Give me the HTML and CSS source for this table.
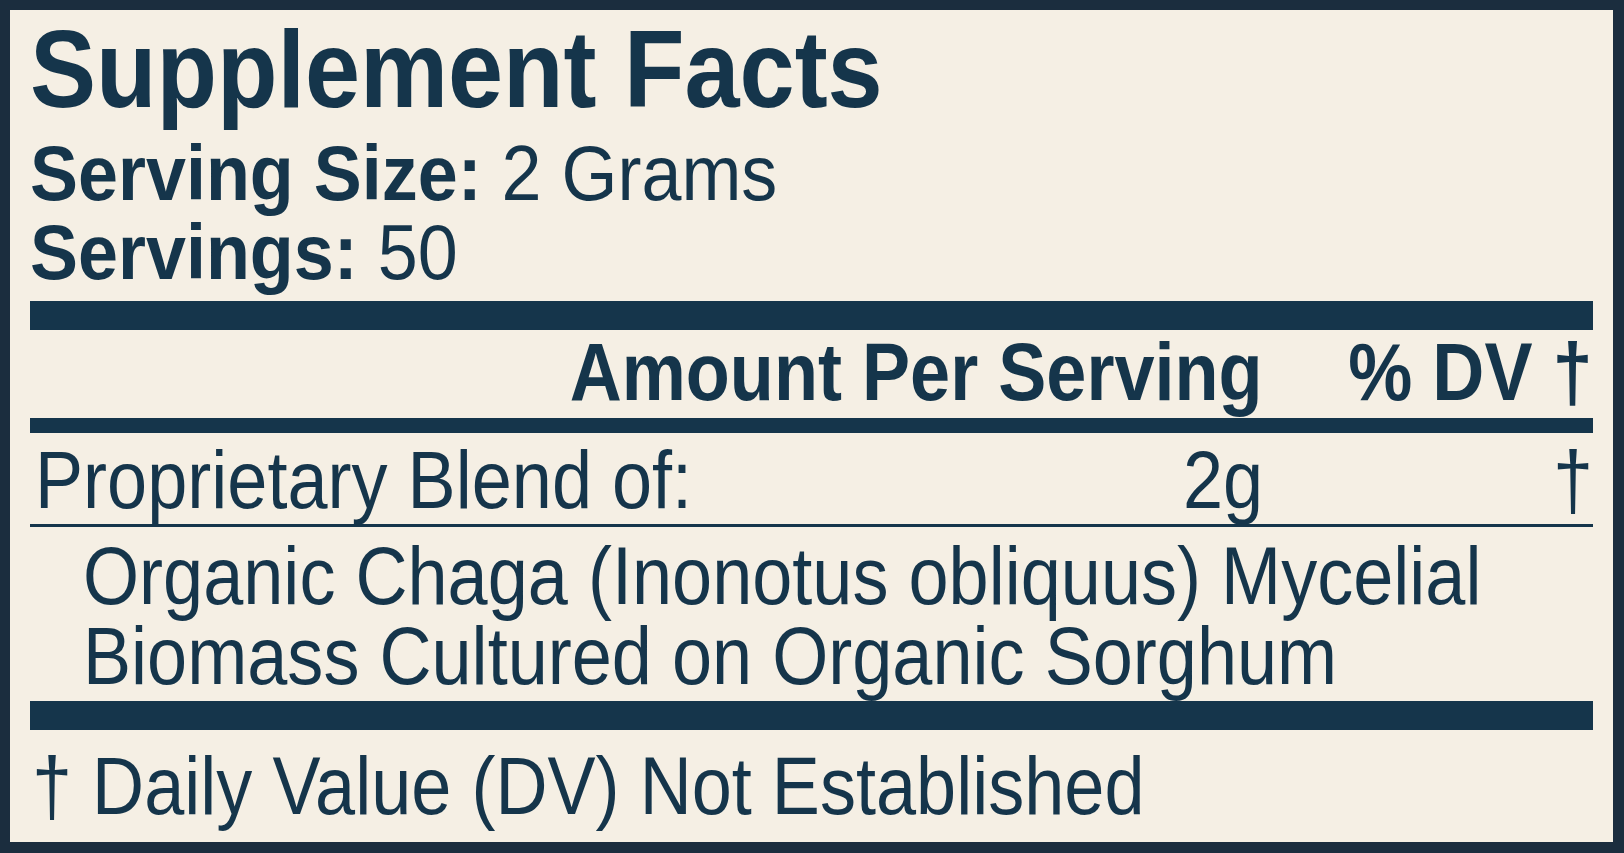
FILE: index.html
```html
<!DOCTYPE html>
<html lang="en">
<head>
<meta charset="utf-8">
<title>Supplement Facts</title>
<link rel="stylesheet" href="styles.css">
</head>
<body>
<div class="label">
  <header class="head">
    <h1 class="title"><span class="sx sx-title">Supplement Facts</span></h1>
    <p class="serv"><span class="sx sx-serv"><b>Serving Size:</b> 2 Grams</span></p>
    <p class="serv"><span class="sx sx-serv"><b>Servings:</b> 50</span></p>
  </header>
  <div class="bar bar-thick bar-first"></div>
  <div class="row row-head">
    <span class="cell name"></span>
    <span class="cell amt"><span class="sxr">Amount Per Serving</span></span>
    <span class="cell dv"><span class="sxr">% DV †</span></span>
  </div>
  <div class="bar bar-mid"></div>
  <div class="row row-item">
    <span class="cell name"><span class="sx">Proprietary Blend of:</span></span>
    <span class="cell amt"><span class="sxr">2g</span></span>
    <span class="cell dv"><span class="sxr">†</span></span>
  </div>
  <div class="bar bar-thin"></div>
  <p class="ingr"><span class="sx">Organic Chaga (Inonotus obliquus) Mycelial<br>Biomass Cultured on Organic Sorghum</span></p>
  <div class="bar bar-thick bar-last"></div>
  <p class="foot"><span class="sx">† Daily Value (DV) Not Established</span></p>
</div>
</body>
</html>
```

FILE: styles.css
```css
* { box-sizing: border-box; }

html, body {
  margin: 0;
  padding: 0;
  background: #1b2d3e;
}

.label {
  width: 1624px;
  height: 853px;
  background: #f5efe4;
  border-style: solid;
  border-color: #1b2d3e;
  border-width: 10px 11px 11px 10px;
  padding: 0 20px;
  color: #15354b;
  font-family: "Liberation Sans", Arial, sans-serif;
  overflow: hidden;
}

.sx, .sxr {
  display: inline-block;
  white-space: nowrap;
  transform: scaleX(0.89);
  transform-origin: left center;
}
.sxr { transform-origin: right center; }
.sx-title { transform: scaleX(0.9); }
.sx-serv { transform: scaleX(0.922); }

.head { margin: 0; }

.title {
  margin: 0 0 6px 0;
  font-size: 110px;
  line-height: 118px;
  font-weight: 700;
}

.serv {
  margin: 0;
  font-size: 78px;
  line-height: 79px;
  font-weight: 400;
}
.serv b { font-weight: 700; }

.bar { background: #15354b; }
.bar-thick { height: 29px; }
.bar-first { margin-top: 9px; }
.bar-mid { height: 15px; }
.bar-thin { height: 3px; }
.bar-last { margin-top: 5px; }

.row {
  display: grid;
  grid-template-columns: 1fr auto 330px;
  font-size: 81px;
  line-height: 84px;
}
.row-head {
  font-weight: 700;
  margin-bottom: 4px;
}
.row-item {
  font-weight: 400;
  padding-top: 5px;
  margin-bottom: 2px;
}
.cell { white-space: nowrap; }
.name { padding-left: 5px; }
.amt, .dv { text-align: right; }

.ingr {
  margin: 0;
  padding: 9px 0 0 53px;
  font-size: 81px;
  line-height: 80px;
}

.foot {
  margin: 0;
  padding: 14px 0 0 2px;
  font-size: 81px;
  line-height: 84px;
}
```
